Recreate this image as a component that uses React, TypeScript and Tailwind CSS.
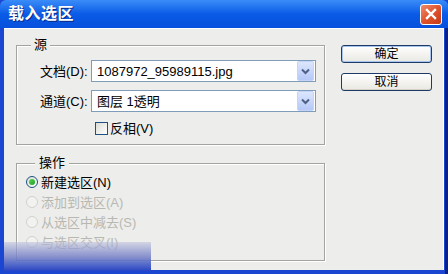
import React from 'react'

const font = { fontFamily: '"Liberation Sans", "Noto Sans CJK SC", sans-serif' }

function Select({ value }: { value: string }) {
  return (
    <div className="w-[225px] h-[22px] border border-[#7F9DB9] bg-white flex items-center">
      <span className="flex-1 pl-[5px] text-[13px] text-black leading-none whitespace-nowrap">{value}</span>
      <div className="w-[17px] h-[20px] mr-px flex items-center justify-center rounded-[2px] bg-gradient-to-b from-[#DCE6FD] to-[#B5C8F7] border border-[#C3D3F9]">
        <svg width="9" height="7" viewBox="0 0 9 7">
          <path d="M1 1.5l3.5 3.5L8 1.5" fill="none" stroke="#4D6185" strokeWidth="2" />
        </svg>
      </div>
    </div>
  )
}

function Radio({ label, checked, disabled }: { label: string, checked?: boolean, disabled?: boolean }) {
  return (
    <div className="h-[20px] flex items-center gap-[3px]">
      <div className={"w-[12px] h-[12px] rounded-full border flex items-center justify-center " + (disabled ? 'border-[#D2D2CC] bg-[#F2F2F0]' : 'border-[#1C5180] bg-gradient-to-br from-[#DCDCD5] to-white')}>
        {checked && <div className="w-[6px] h-[6px] rounded-full bg-gradient-to-br from-[#55D455] to-[#21A121]" />}
      </div>
      <span className={"text-[13px] leading-none " + (disabled ? 'text-[#B8B8B2]' : 'text-black')}>{label}</span>
    </div>
  )
}

function Button({ label, isDefault }: { label: string, isDefault?: boolean }) {
  return (
    <button className={"w-[91px] h-[18px] rounded-[3px] border border-[#1E3A66] bg-gradient-to-b from-white to-[#E9E8E2] flex items-center justify-center text-[12px] text-black leading-none " + (isDefault ? 'shadow-[inset_0_0_0_1px_#A8C4EE]' : 'shadow-[inset_0_-1px_0_#D6D0C5]')}>
      {label}
    </button>
  )
}

export default function App() {
  return (
    <div className="w-[448px] h-[274px] relative overflow-hidden bg-[#1A46D2] flex flex-col" style={font}>
      {/* title bar */}
      <div className="h-[28px] shrink-0 flex items-center justify-between pl-[8px] pr-[6px] bg-gradient-to-b from-[#3A8CF8] via-[#0A5BE6] to-[#0750DC] rounded-t-[6px]">
        <span className="text-white text-[16px] font-bold leading-none tracking-[0.5px] [text-shadow:1px_1px_0_#0A2A8A]">载入选区</span>
        <div className="w-[22px] h-[21px] rounded-[3px] border border-white bg-gradient-to-br from-[#EE8A6A] via-[#E0532C] to-[#C43A15] flex items-center justify-center">
          <svg width="12" height="12" viewBox="0 0 12 12">
            <path d="M2 2l8 8M10 2l-8 8" stroke="white" strokeWidth="2.4" strokeLinecap="square" />
          </svg>
        </div>
      </div>

      {/* body */}
      <div className="flex-1 ml-[4px] mr-[4px] mb-[4px] bg-[#EDEDEB] border-t border-white flex pl-[12px] pt-[16px] shadow-[inset_-1px_0_0_#fff]">
        <div className="flex flex-col gap-[18px]">
          {/* 源 */}
          <div className="relative w-[309px] h-[100px] border border-[#A3A3A0] shadow-[1px_1px_0_#fff,inset_1px_1px_0_#fff] pt-[14px] pl-[23px] flex flex-col gap-[8px]">
            <span className="absolute -top-[9px] left-[14px] px-[3px] bg-[#EDEDEB] text-[13px] leading-[16px] text-black">源</span>
            <div className="flex items-center h-[22px]">
              <span className="w-[51px] text-[13px] leading-none text-black whitespace-nowrap">文档(D):</span>
              <Select value="1087972_95989115.jpg" />
            </div>
            <div className="flex items-center h-[22px]">
              <span className="w-[51px] text-[13px] leading-none text-black whitespace-nowrap">通道(C):</span>
              <Select value="图层 1透明" />
            </div>
            <div className="flex items-center h-[16px] ml-[55px] gap-[2px]">
              <div className="w-[13px] h-[13px] border border-[#1C5180] bg-gradient-to-br from-[#DCDCD5] to-white" />
              <span className="text-[13px] leading-none text-black">反相(V)</span>
            </div>
          </div>

          {/* 操作 */}
          <div className="relative w-[309px] h-[98px] border border-[#A3A3A0] shadow-[1px_1px_0_#fff,inset_1px_1px_0_#fff] pt-[8px] pl-[9px] flex flex-col">
            <span className="absolute -top-[9px] left-[18px] px-[4px] bg-[#EDEDEB] text-[13px] leading-[16px] text-black">操作</span>
            <Radio label="新建选区(N)" checked />
            <Radio label="添加到选区(A)" disabled />
            <Radio label="从选区中减去(S)" disabled />
            <Radio label="与选区交叉(I)" disabled />
          </div>
        </div>

        <div className="ml-[16px] flex flex-col gap-[10px]">
          <Button label="确定" isDefault />
          <Button label="取消" />
        </div>
      </div>

      {/* right frame shade */}
      <div className="absolute top-[28px] right-0 w-[3px] h-[246px] bg-[#0B237E]" />

      {/* blurred overlay at bottom left */}
      <div className="absolute left-[4px] top-[242px] w-[147px] h-[29px] bg-gradient-to-b from-[rgba(190,194,220,0.55)] via-[rgba(120,130,200,0.85)] to-[#2A44C4]" />
    </div>
  )
}
